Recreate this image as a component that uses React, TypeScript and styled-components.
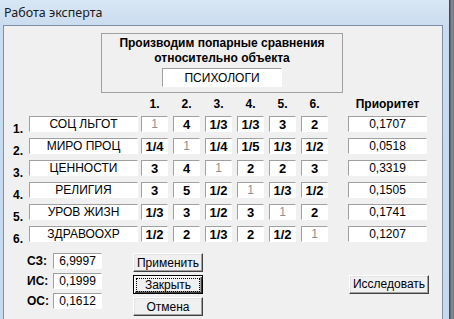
import React from 'react';
import styled, { createGlobalStyle, css } from 'styled-components';

const Global = createGlobalStyle`
  html, body { margin: 0; padding: 0; width: 454px; height: 319px; overflow: hidden; background: #f0f0f0; }
  #root { width: 454px; height: 319px; }
`;

const Screen = styled.div`
  display: flex;
  width: 454px;
  height: 319px;
  overflow: hidden;
`;

const Win = styled.div`
  display: flex;
  flex-direction: column;
  width: 449px;
  height: 319px;
  background: linear-gradient(180deg, #d9e7f5 0px, #cadcef 25px, #c6d9ed 100%);
`;

const BehindStrip = styled.div`
  width: 5px;
  height: 319px;
  background: linear-gradient(90deg, #5a5f66 0, #8c8f93 2px, #6d7075 4px);
  border-left: 1px solid #3b4a5c;
  box-sizing: border-box;
`;

const TitleBar = styled.div`
  height: 25px;
  display: flex;
  align-items: center;
  padding-left: 4px;
  font-family: "Noto Sans", "Open Sans", sans-serif;
  font-size: 12.5px;
  color: #1a1a1a;
  box-sizing: border-box;
  padding-bottom: 1px;
`;

const FrameBody = styled.div`
  flex: 1;
  display: flex;
  padding: 0 6px 0 3px;
`;

const Client = styled.div`
  flex: 1;
  background: #f0f0f0;
  border: 1px solid #7f90a5;
  border-bottom: none;
  font-family: "Liberation Sans", Arial, sans-serif;
  font-size: 12px;
  color: #000;
`;

const HeaderBox = styled.div`
  margin: 7px 0 0 97px;
  width: 242px;
  height: 60px;
  box-sizing: border-box;
  border: 1px solid #a0a0a0;
  display: flex;
  flex-direction: column;
  align-items: center;
  padding-top: 2px;
`;

const HeaderLine = styled.div`
  font-weight: bold;
  line-height: 15px;
  white-space: nowrap;
`;

const sunken = css`
  box-sizing: border-box;
  background: #fff;
  border: 1px solid;
  border-color: #a0a0a0 #ffffff #ffffff #a0a0a0;
  display: flex;
  align-items: center;
  justify-content: center;
  white-space: nowrap;
`;

const ObjectField = styled.div`
  ${sunken};
  margin-top: 2px;
  width: 120px;
  height: 19px;
`;

const Table = styled.div`
  margin: 6px 0 0 8px;
  display: flex;
  flex-direction: column;
  gap: 6px;
`;

const Row = styled.div<{ $head?: boolean }>`
  display: flex;
  align-items: flex-start;
  height: ${p => (p.$head ? '11px' : '16px')};
`;

const RowLabel = styled.div<{ $head?: boolean }>`
  width: 17px;
  padding-top: ${p => (p.$head ? 0 : 5)}px;
  padding-left: 1px;
  box-sizing: border-box;
  font-weight: bold;
  line-height: 16px;
`;

const NameField = styled.div`
  ${sunken};
  width: 109px;
  height: 16px;
  margin-right: 3px;
`;

const NameSpacer = styled.div`
  width: 109px;
  margin-right: 3px;
`;

const Cells = styled.div`
  display: flex;
  gap: 5px;
`;

const Cell = styled.div<{ $diag?: boolean }>`
  ${sunken};
  width: 27px;
  height: 16px;
  font-size: ${p => (p.$diag ? 12 : 13)}px;
  font-weight: ${p => (p.$diag ? 'normal' : 'bold')};
  color: ${p => (p.$diag ? '#8e8e8e' : '#000')};
`;

const ColHead = styled.div`
  width: 27px;
  text-align: center;
  font-weight: bold;
  line-height: 11px;
`;

const PriorityField = styled.div`
  ${sunken};
  margin-left: 20px;
  width: 79px;
  height: 16px;
`;

const PriorityHead = styled.div`
  margin-left: 20px;
  width: 79px;
  text-align: center;
  font-weight: bold;
  line-height: 11px;
`;

const Bottom = styled.div`
  display: flex;
  margin-top: 11px;
  padding-left: 23px;
`;

const Stats = styled.div`
  display: grid;
  grid-template-columns: 22px 49px;
  column-gap: 4px;
  row-gap: 4px;
  align-content: start;
`;

const StatLabel = styled.div`
  font-weight: bold;
  line-height: 16px;
  text-align: left;
`;

const StatValue = styled.div`
  ${sunken};
  height: 16px;
`;

const Buttons = styled.div`
  margin-left: 31px;
  display: flex;
  flex-direction: column;
  gap: 3px;
`;

const Button = styled.div<{ $default?: boolean; $width?: number }>`
  box-sizing: border-box;
  width: ${p => p.$width ?? 70}px;
  height: 19px;
  display: flex;
  align-items: center;
  justify-content: center;
  background: #f0f0f0;
  border: 1px solid;
  border-color: #ffffff #404040 #404040 #ffffff;
  box-shadow: inset -1px -1px 0 #a0a0a0, inset 1px 1px 0 #e3e3e3;
  white-space: nowrap;
  ${p =>
    p.$default &&
    css`
      border: 1px solid #000;
      box-shadow: inset 1px 1px 0 #fff, inset -1px -1px 0 #404040, inset -2px -2px 0 #a0a0a0;
    `}
`;

const FocusText = styled.span`
  outline: 1px dotted #000;
  outline-offset: 0px;
  padding: 0 8px;
  line-height: 12px;
`;

const SideButton = styled.div`
  margin-left: 146px;
  align-self: center;
  margin-top: -1px;
`;

const names = ['СОЦ ЛЬГОТ', 'МИРО ПРОЦ', 'ЦЕННОСТИ', 'РЕЛИГИЯ', 'УРОВ ЖИЗН', 'ЗДРАВООХР'];
const matrix = [
  ['1', '4', '1/3', '1/3', '3', '2'],
  ['1/4', '1', '1/4', '1/5', '1/3', '1/2'],
  ['3', '4', '1', '2', '2', '3'],
  ['3', '5', '1/2', '1', '1/3', '1/2'],
  ['1/3', '3', '1/2', '3', '1', '2'],
  ['1/2', '2', '1/3', '2', '1/2', '1'],
];
const priorities = ['0,1707', '0,0518', '0,3319', '0,1505', '0,1741', '0,1207'];
const stats: [string, string][] = [
  ['СЗ:', '6,9997'],
  ['ИС:', '0,1999'],
  ['ОС:', '0,1612'],
];

export default function App() {
  return (
    <>
      <Global />
      <Screen>
        <Win>
          <TitleBar>Работа эксперта</TitleBar>
          <FrameBody>
            <Client>
              <HeaderBox>
                <HeaderLine>Производим попарные сравнения</HeaderLine>
                <HeaderLine>относительно объекта</HeaderLine>
                <ObjectField>ПСИХОЛОГИ</ObjectField>
              </HeaderBox>
              <Table>
                <Row $head>
                  <RowLabel $head />
                  <NameSpacer />
                  <Cells>
                    {[1, 2, 3, 4, 5, 6].map(n => (
                      <ColHead key={n}>{n}.</ColHead>
                    ))}
                  </Cells>
                  <PriorityHead>Приоритет</PriorityHead>
                </Row>
                {names.map((name, i) => (
                  <Row key={name}>
                    <RowLabel>{i + 1}.</RowLabel>
                    <NameField>{name}</NameField>
                    <Cells>
                      {matrix[i].map((v, j) => (
                        <Cell key={j} $diag={i === j}>
                          {v}
                        </Cell>
                      ))}
                    </Cells>
                    <PriorityField>{priorities[i]}</PriorityField>
                  </Row>
                ))}
              </Table>
              <Bottom>
                <Stats>
                  {stats.map(([l, v]) => (
                    <React.Fragment key={l}>
                      <StatLabel>{l}</StatLabel>
                      <StatValue>{v}</StatValue>
                    </React.Fragment>
                  ))}
                </Stats>
                <Buttons>
                  <Button>Применить</Button>
                  <Button $default>
                    <FocusText>Закрыть</FocusText>
                  </Button>
                  <Button>Отмена</Button>
                </Buttons>
                <SideButton>
                  <Button $width={80}>Исследовать</Button>
                </SideButton>
              </Bottom>
            </Client>
          </FrameBody>
        </Win>
        <BehindStrip />
      </Screen>
    </>
  );
}
